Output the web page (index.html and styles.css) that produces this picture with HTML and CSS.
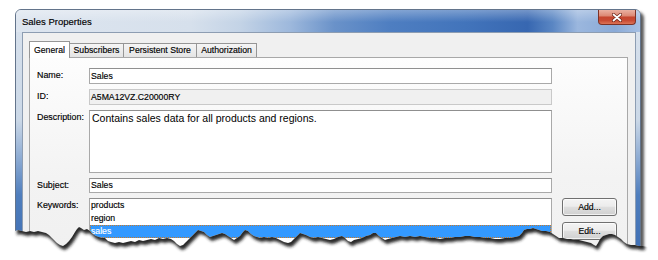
FILE: index.html
```html
<!DOCTYPE html>
<html>
<head>
<meta charset="utf-8">
<link rel="stylesheet" href="styles.css">
</head>
<body>
<div class="stage">
  <div class="window">
    <div class="titlebar">
      <span class="title">Sales Properties</span>
      <div class="close">
        <svg width="10" height="9" viewBox="0 0 10 9"><path d="M1.5 1.5 L8.5 7.5 M8.5 1.5 L1.5 7.5" stroke="#6a2418" stroke-width="3.2" stroke-linecap="round"/><path d="M1.5 1.5 L8.5 7.5 M8.5 1.5 L1.5 7.5" stroke="#ffffff" stroke-width="1.8" stroke-linecap="round"/></svg>
      </div>
    </div>
    <div class="client">
      <div class="tabs">
        <div class="tab active w-general">General</div>
        <div class="tab w-subs">Subscribers</div>
        <div class="tab w-store">Persistent Store</div>
        <div class="tab w-auth">Authorization</div>
      </div>
      <div class="panel">
        <div class="form">
          <div class="lbl">Name:</div>
          <div class="field">Sales</div>
          <div></div>

          <div class="lbl">ID:</div>
          <div class="field id">A5MA12VZ.C20000RY</div>
          <div></div>

          <div class="lbl">Description:</div>
          <div class="field desc">Contains sales data for all products and regions.</div>
          <div></div>

          <div class="lbl">Subject:</div>
          <div class="field subj">Sales</div>
          <div></div>

          <div class="lbl">Keywords:</div>
          <div class="list">
            <div class="item">products</div>
            <div class="item">region</div>
            <div class="item sel">sales</div>
          </div>
          <div class="btns">
            <div class="btn">Add...</div>
            <div class="btn">Edit...</div>
          </div>
        </div>
      </div>
    </div>
  </div>

  <svg class="tear" width="658" height="260" viewBox="0 0 658 260">
    <defs>
      <clipPath id="below">
        <path d="M0 231 L15 231 L18 230 L22 231 L26 232 L30 231 L34 232 L38 231 L42 232 L46 233 L49 235 L52 238 L54 240 L57 243 L60 245 L63 246 L66 244 L69 241 L72 237 L75 232 L77 229 L79 227 L81 228 L84 230 L87 229 L90 231 L93 234 L96 236 L99 237 L102 238 L105 238 L108 241 L111 242 L115 243 L119 242 L123 243 L127 242 L131 241 L135 242 L139 240 L143 241 L147 240 L151 239 L155 240 L159 238 L163 239 L167 238 L171 239 L174 241 L177 244 L180 246 L183 245 L186 242 L189 239 L192 236 L195 233 L198 230 L201 231 L204 232 L207 235 L210 237 L213 236 L216 235 L219 234 L222 233 L225 234 L228 236 L231 238 L234 240 L237 238 L240 236 L243 232 L245 230 L248 231 L251 234 L254 236 L257 237 L260 238 L264 237 L268 238 L272 237 L276 238 L280 240 L284 242 L288 243 L291 242 L294 239 L297 236 L300 233 L303 234 L306 235 L310 237 L314 238 L318 237 L322 238 L326 239 L330 240 L334 239 L338 237 L342 236 L345 238 L348 241 L351 242 L354 240 L358 239 L362 238 L366 236 L370 235 L373 233 L376 233 L379 236 L382 238 L385 240 L388 239 L392 238 L396 237 L400 236 L405 237 L410 236 L415 237 L420 236 L425 237 L430 238 L435 238 L440 239 L445 238 L450 238 L455 237 L460 237 L465 236 L470 236 L475 237 L480 237 L485 238 L490 238 L495 239 L500 239 L505 238 L510 238 L515 237 L519 236 L522 233 L524 230 L527 229 L530 229 L533 228 L536 229 L539 230 L542 231 L546 231 L550 232 L553 234 L556 236 L559 238 L563 238 L567 239 L571 239 L575 240 L579 240 L583 241 L587 242 L591 243 L594 245 L596 246 L598 243 L600 239 L603 236 L606 235 L609 234 L612 234 L615 235 L618 237 L621 239 L624 242 L627 244 L631 245 L635 245 L639 246 L643 246 L648 247 L658 247 L658 260 L0 260 Z"/>
      </clipPath>
      <filter id="soft" x="-5%" y="-5%" width="110%" height="110%">
        <feGaussianBlur stdDeviation="1.8"/>
      </filter>
    </defs>
    <rect x="0" y="200" width="658" height="60" fill="#ffffff" clip-path="url(#below)"/>
    <g clip-path="url(#below)">
      <path transform="translate(2 4)" filter="url(#soft)" fill="#1e1e1e" fill-opacity="0.95" d="M15 0 L15 231 L18 230 L22 231 L26 232 L30 231 L34 232 L38 231 L42 232 L46 233 L49 235 L52 238 L54 240 L57 243 L60 245 L63 246 L66 244 L69 241 L72 237 L75 232 L77 229 L79 227 L81 228 L84 230 L87 229 L90 231 L93 234 L96 236 L99 237 L102 238 L105 238 L108 241 L111 242 L115 243 L119 242 L123 243 L127 242 L131 241 L135 242 L139 240 L143 241 L147 240 L151 239 L155 240 L159 238 L163 239 L167 238 L171 239 L174 241 L177 244 L180 246 L183 245 L186 242 L189 239 L192 236 L195 233 L198 230 L201 231 L204 232 L207 235 L210 237 L213 236 L216 235 L219 234 L222 233 L225 234 L228 236 L231 238 L234 240 L237 238 L240 236 L243 232 L245 230 L248 231 L251 234 L254 236 L257 237 L260 238 L264 237 L268 238 L272 237 L276 238 L280 240 L284 242 L288 243 L291 242 L294 239 L297 236 L300 233 L303 234 L306 235 L310 237 L314 238 L318 237 L322 238 L326 239 L330 240 L334 239 L338 237 L342 236 L345 238 L348 241 L351 242 L354 240 L358 239 L362 238 L366 236 L370 235 L373 233 L376 233 L379 236 L382 238 L385 240 L388 239 L392 238 L396 237 L400 236 L405 237 L410 236 L415 237 L420 236 L425 237 L430 238 L435 238 L440 239 L445 238 L450 238 L455 237 L460 237 L465 236 L470 236 L475 237 L480 237 L485 238 L490 238 L495 239 L500 239 L505 238 L510 238 L515 237 L519 236 L522 233 L524 230 L527 229 L530 229 L533 228 L536 229 L539 230 L542 231 L546 231 L550 232 L553 234 L556 236 L559 238 L563 238 L567 239 L571 239 L575 240 L579 240 L583 241 L587 242 L591 243 L594 245 L596 246 L598 243 L600 239 L603 236 L606 235 L609 234 L612 234 L615 235 L618 237 L621 239 L624 242 L627 244 L631 245 L635 245 L639 246 L643 246 L644 0 Z"/>
    </g>
  </svg>
</div>
</body>
</html>
```
FILE: styles.css
```css
body {
  margin: 0;
  background: #ffffff;
  font-family: "Liberation Sans", Arial, sans-serif;
  color: #000;
}

.stage {
  position: relative;
  width: 658px;
  height: 260px;
  overflow: hidden;
  background: #ffffff;
}

.window {
  margin: 9px 0 0 15px;
  width: 626px;
  height: 300px;
  box-sizing: border-box;
  border: 1px solid #63748b;
  border-radius: 6px 6px 0 0;
  background:
    linear-gradient(to bottom, #d9e2ed 0px, #cbd8e7 110px, #8aa9d2 150px, #4f7ebd 185px, #3f6fb4 240px);
  box-shadow: 3px 3px 3px rgba(0, 0, 0, 0.65);
  display: flex;
  flex-direction: column;
}

.titlebar {
  height: 22px;
  flex: none;
  display: flex;
  justify-content: space-between;
  align-items: flex-start;
  padding: 0 4px 0 6px;
  border-radius: 5px 5px 0 0;
  background:
    linear-gradient(to bottom, rgba(255, 255, 255, 0.3) 0%, rgba(255, 255, 255, 0) 55%),
    linear-gradient(to right, #dde5ef 0%, #d6e0ec 28%, #c3d3e6 36%, #9db8dc 44%, #6a92c9 51%, #4e7ec1 60%, #4274bb 72%, #3767b1 82%, #5a86c3 86%, #9bb7de 90%, #8aaad7 96%, #a6bfe2 100%);
}

.title {
  font-size: 9.5px;
  line-height: 23px;
  color: #000;
  -webkit-text-stroke: 0.15px #000;
}

.close {
  width: 38px;
  height: 15px;
  box-sizing: border-box;
  border: 1px solid #7d3226;
  border-top: none;
  border-radius: 0 0 4px 4px;
  background: linear-gradient(to bottom, #eab1a2 0%, #dd8a76 40%, #c6462f 52%, #c84b34 75%, #dc7458 100%);
  display: flex;
  align-items: center;
  justify-content: center;
}

.client {
  flex: 1;
  margin: 0 4px 0 6px;
  border: 1px solid #8d9db2;
  border-bottom: none;
  background: #f0f0f0;
  padding: 8px 7px 0 6px;
}

.tabs {
  display: flex;
  align-items: flex-end;
  height: 16px;
}

.tab {
  height: 14px;
  box-sizing: border-box;
  border: 1px solid #969696;
  border-bottom: none;
  margin-left: -1px;
  font-size: 8.7px;
  line-height: 13px;
  text-align: center;
  background: linear-gradient(to bottom, #f5f5f5, #e4e4e4);
  color: #000;
  -webkit-text-stroke: 0.15px #000;
}

.tab:first-child {
  margin-left: 0;
}

.tab.active {
  height: 17px;
  margin-bottom: -1px;
  padding-top: 2px;
  background: #ffffff;
  position: relative;
  z-index: 1;
}

.w-general { width: 41px; }
.w-subs { width: 55px; }
.w-store { width: 74px; }
.w-auth { width: 61px; }

.panel {
  border: 1px solid #a8a8a8;
  background: linear-gradient(to bottom, #fdfdfd 0px, #f3f3f3 120px, #f0f0f0 200px);
  padding: 10px 10px 0 7px;
  height: 220px;
}

.form {
  display: grid;
  grid-template-columns: 52px 463px 65px;
  grid-template-rows: 16px 16px 63px 15px 62px;
  row-gap: 5px;
}

.lbl {
  font-size: 8.9px;
  line-height: 12px;
  padding-top: 1px;
  color: #000;
  -webkit-text-stroke: 0.15px #000;
}

.field {
  box-sizing: border-box;
  border: 1px solid #a9a9a9;
  border-top-color: #8f8f8f;
  background: #ffffff;
  font-size: 8.7px;
  line-height: 14px;
  padding-left: 1px;
  white-space: nowrap;
  -webkit-text-stroke: 0.15px #000;
}

.field.id {
  background: #f0f0f0;
  border-color: #c9c9c9;
}

.field.desc {
  font-size: 10.5px;
  padding: 0 2px;
  -webkit-text-stroke: 0;
}

.field.subj {
  line-height: 13px;
}

.list {
  box-sizing: border-box;
  border: 1px solid #a9a9a9;
  border-top-color: #8f8f8f;
  background: #ffffff;
  font-size: 8.7px;
  -webkit-text-stroke: 0.15px #000;
}

.item {
  height: 13px;
  line-height: 13px;
  padding-left: 1px;
  box-sizing: border-box;
}

.item.sel {
  background: #3399ff;
  color: #ffffff;
  -webkit-text-stroke: 0.15px #ffffff;
  border: 1px dotted #c87a2a;
  line-height: 11px;
  padding-left: 0;
}

.btns {
  padding-left: 10px;
  display: flex;
  flex-direction: column;
  gap: 6px;
}

.btn {
  width: 55px;
  height: 18px;
  box-sizing: border-box;
  border: 1px solid #707070;
  border-radius: 3px;
  background: linear-gradient(to bottom, #f4f4f4 0%, #ececec 45%, #dedede 52%, #d0d0d0 100%);
  box-shadow: inset 0 0 0 1px rgba(255, 255, 255, 0.7);
  font-size: 8.7px;
  line-height: 16px;
  text-align: center;
  color: #000;
  -webkit-text-stroke: 0.15px #000;
}

.tear {
  position: absolute;
  left: 0;
  top: 0;
}
```
